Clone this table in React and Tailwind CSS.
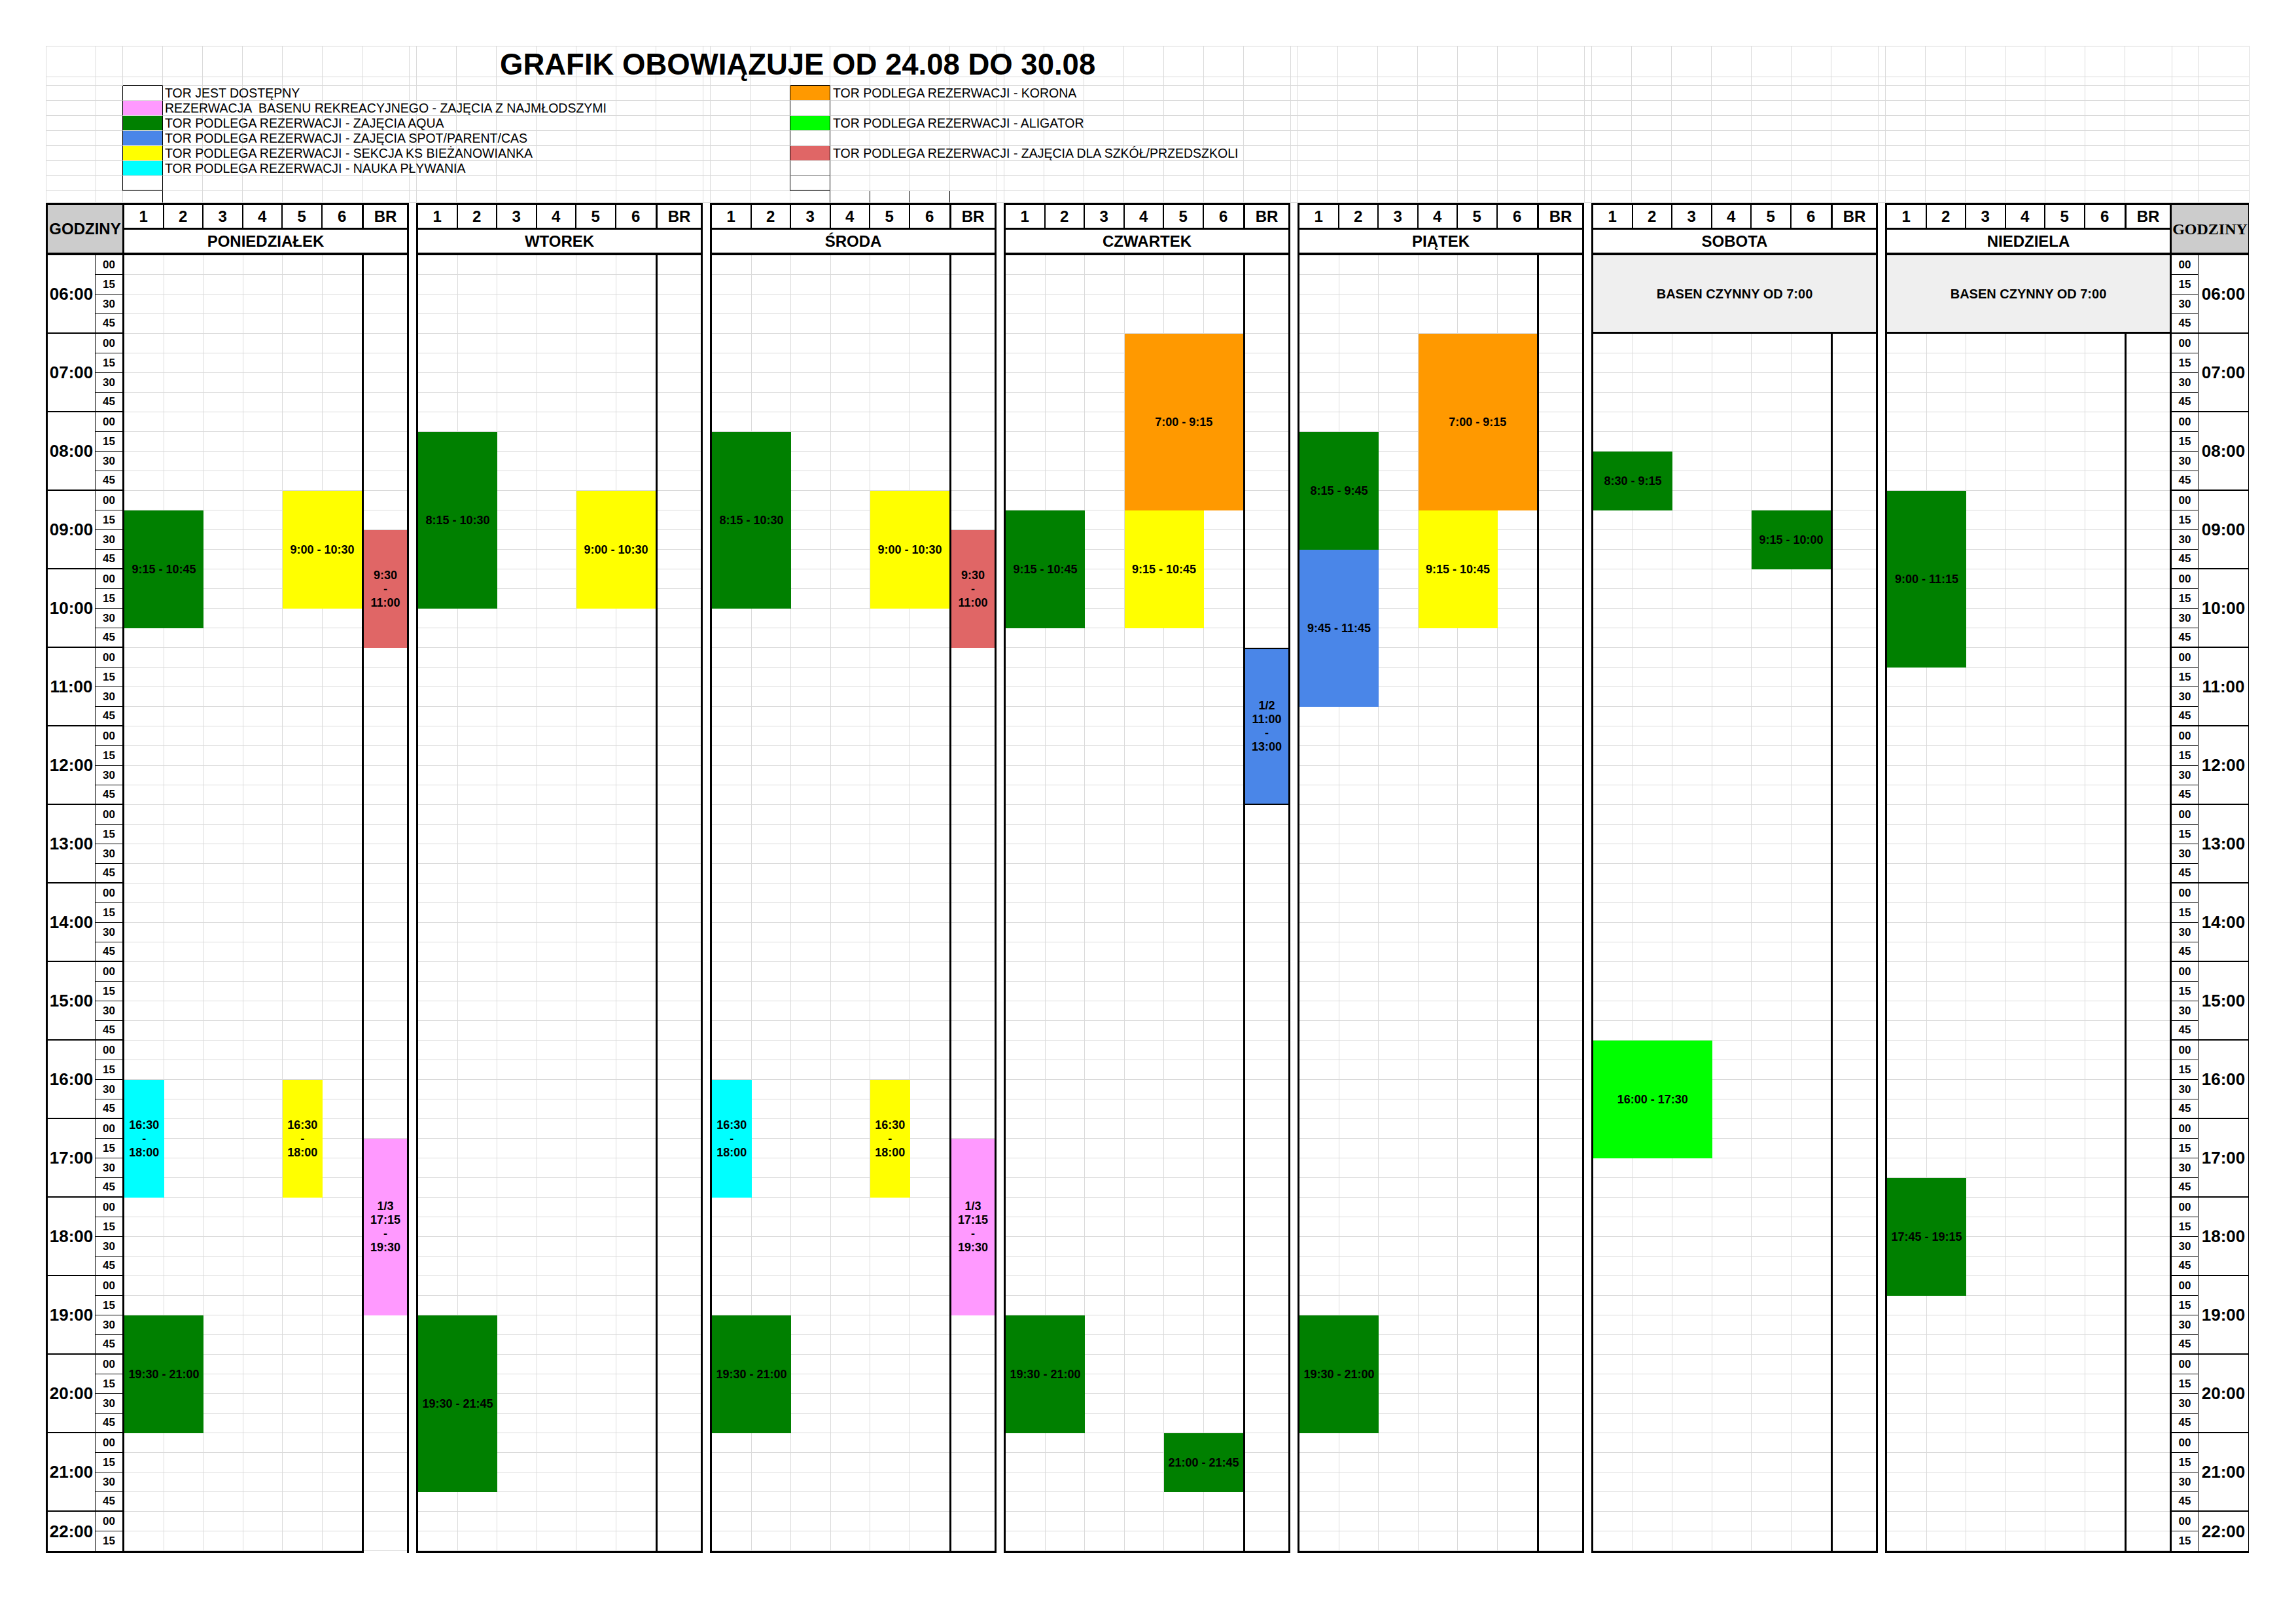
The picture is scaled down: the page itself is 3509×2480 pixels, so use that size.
import React from 'react';

const FONT = "font-['Liberation_Sans',Arial,sans-serif]";
const SERIF = "font-['Liberation_Serif','Times_New_Roman',serif]";

const DAYS = ['PONIEDZIAŁEK', 'WTOREK', 'ŚRODA', 'CZWARTEK', 'PIĄTEK', 'SOBOTA', 'NIEDZIELA'];

const COLORS = {
  green: 'bg-[#008000]',
  yellow: 'bg-[#ffff00]',
  cyan: 'bg-[#00ffff]',
  pink: 'bg-[#ff99ff]',
  red: 'bg-[#e06666]',
  blue: 'bg-[#4a86e8]',
  orange: 'bg-[#ff9900]',
  lime: 'bg-[#00ff00]',
};

const EVENTS = [
  // Poniedziałek
  { d: 0, k: 0, n: 2, s: '9:15', e: '10:45', l: ['9:15 - 10:45'], c: 'green' },
  { d: 0, k: 4, n: 2, s: '9:00', e: '10:30', l: ['9:00 - 10:30'], c: 'yellow' },
  { d: 0, k: -1, s: '9:30', e: '11:00', l: ['9:30', '-', '11:00'], c: 'red' },
  { d: 0, k: 0, n: 1, s: '16:30', e: '18:00', l: ['16:30', '-', '18:00'], c: 'cyan' },
  { d: 0, k: 4, n: 1, s: '16:30', e: '18:00', l: ['16:30', '-', '18:00'], c: 'yellow' },
  { d: 0, k: -1, s: '17:15', e: '19:30', l: ['1/3', '17:15', '-', '19:30'], c: 'pink' },
  { d: 0, k: 0, n: 2, s: '19:30', e: '21:00', l: ['19:30 - 21:00'], c: 'green' },
  // Wtorek
  { d: 1, k: 0, n: 2, s: '8:15', e: '10:30', l: ['8:15 - 10:30'], c: 'green' },
  { d: 1, k: 4, n: 2, s: '9:00', e: '10:30', l: ['9:00 - 10:30'], c: 'yellow' },
  { d: 1, k: 0, n: 2, s: '19:30', e: '21:45', l: ['19:30 - 21:45'], c: 'green' },
  // Środa
  { d: 2, k: 0, n: 2, s: '8:15', e: '10:30', l: ['8:15 - 10:30'], c: 'green' },
  { d: 2, k: 4, n: 2, s: '9:00', e: '10:30', l: ['9:00 - 10:30'], c: 'yellow' },
  { d: 2, k: -1, s: '9:30', e: '11:00', l: ['9:30', '-', '11:00'], c: 'red' },
  { d: 2, k: 0, n: 1, s: '16:30', e: '18:00', l: ['16:30', '-', '18:00'], c: 'cyan' },
  { d: 2, k: 4, n: 1, s: '16:30', e: '18:00', l: ['16:30', '-', '18:00'], c: 'yellow' },
  { d: 2, k: -1, s: '17:15', e: '19:30', l: ['1/3', '17:15', '-', '19:30'], c: 'pink' },
  { d: 2, k: 0, n: 2, s: '19:30', e: '21:00', l: ['19:30 - 21:00'], c: 'green' },
  // Czwartek
  { d: 3, k: 0, n: 2, s: '9:15', e: '10:45', l: ['9:15 - 10:45'], c: 'green' },
  { d: 3, k: 3, n: 3, s: '7:00', e: '9:15', l: ['7:00 - 9:15'], c: 'orange' },
  { d: 3, k: 3, n: 2, s: '9:15', e: '10:45', l: ['9:15 - 10:45'], c: 'yellow' },
  { d: 3, k: -1, s: '11:00', e: '13:00', l: ['1/2', '11:00', '-', '13:00'], c: 'blue', b: true },
  { d: 3, k: 0, n: 2, s: '19:30', e: '21:00', l: ['19:30 - 21:00'], c: 'green' },
  { d: 3, k: 4, n: 2, s: '21:00', e: '21:45', l: ['21:00 - 21:45'], c: 'green' },
  // Piątek
  { d: 4, k: 0, n: 2, s: '8:15', e: '9:45', l: ['8:15 - 9:45'], c: 'green' },
  { d: 4, k: 0, n: 2, s: '9:45', e: '11:45', l: ['9:45 - 11:45'], c: 'blue' },
  { d: 4, k: 3, n: 3, s: '7:00', e: '9:15', l: ['7:00 - 9:15'], c: 'orange' },
  { d: 4, k: 3, n: 2, s: '9:15', e: '10:45', l: ['9:15 - 10:45'], c: 'yellow' },
  { d: 4, k: 0, n: 2, s: '19:30', e: '21:00', l: ['19:30 - 21:00'], c: 'green' },
  // Sobota
  { d: 5, k: 0, n: 2, s: '8:30', e: '9:15', l: ['8:30 - 9:15'], c: 'green' },
  { d: 5, k: 4, n: 2, s: '9:15', e: '10:00', l: ['9:15 - 10:00'], c: 'green' },
  { d: 5, k: 0, n: 3, s: '16:00', e: '17:30', l: ['16:00 - 17:30'], c: 'lime' },
  // Niedziela
  { d: 6, k: 0, n: 2, s: '9:00', e: '11:15', l: ['9:00 - 11:15'], c: 'green' },
  { d: 6, k: 0, n: 2, s: '17:45', e: '19:15', l: ['17:45 - 19:15'], c: 'green' },
];

const toMin = (t) => {
  const [h, m] = t.split(':').map(Number);
  return h * 60 + m;
};

const LEFT_LEGEND = [
  { c: 'bg-white', t: 'TOR JEST DOSTĘPNY' },
  { c: 'bg-[#ff99ff]', t: 'REZERWACJA  BASENU REKREACYJNEGO - ZAJĘCIA Z NAJMŁODSZYMI' },
  { c: 'bg-[#008000]', t: 'TOR PODLEGA REZERWACJI - ZAJĘCIA AQUA' },
  { c: 'bg-[#4a86e8]', t: 'TOR PODLEGA REZERWACJI - ZAJĘCIA SPOT/PARENT/CAS' },
  { c: 'bg-[#ffff00]', t: 'TOR PODLEGA REZERWACJI - SEKCJA KS BIEŻANOWIANKA' },
  { c: 'bg-[#00ffff]', t: 'TOR PODLEGA REZERWACJI - NAUKA PŁYWANIA' },
  { c: 'bg-white', t: '' },
];

const RIGHT_LEGEND = [
  { c: 'bg-[#ff9900]', t: 'TOR PODLEGA REZERWACJI - KORONA' },
  { c: 'bg-white', t: '' },
  { c: 'bg-[#00ff00]', t: 'TOR PODLEGA REZERWACJI - ALIGATOR' },
  { c: 'bg-white', t: '' },
  { c: 'bg-[#e06666]', t: 'TOR PODLEGA REZERWACJI - ZAJĘCIA DLA SZKÓŁ/PRZEDSZKOLI' },
  { c: 'bg-white', t: '' },
  { c: 'bg-white', t: '' },
];

const TOP_COLS = (() => {
  const cols = [{ t: 'h', w: 'w-[76px]' }, { t: 'm', w: 'w-[41px]' }];
  for (let d = 0; d < 7; d++) {
    for (let k = 0; k < 6; k++) cols.push({ t: 'l', d, k, w: 'w-[61px]' });
    cols.push({ t: 'br', d, w: 'w-[72px]' });
    if (d < 6) cols.push({ t: 'g', d, w: 'w-[11px]' });
  }
  cols.push({ t: 'rm', w: 'w-[41px]' });
  cols.push({ t: 'rh', w: 'w-[77px]' });
  return cols;
})();

const TOP_ROWS = [
  'h-[47px]', 'h-[13px]', 'h-[23px]', 'h-[23px]', 'h-[23px]', 'h-[23px]',
  'h-[23px]', 'h-[23px]', 'h-[23px]', 'h-[18px]',
];

function LegendText({ text, pad }) {
  return (
    <span className={`relative z-10 block whitespace-pre text-[19.5px] leading-[22px] ${pad}`}>{text}</span>
  );
}

function TopCell({ r, c }) {
  const L = (d, k) => c.t === 'l' && c.d === d && c.k === k;
  let right = 'border-r-[#dadada]';
  let bottom = 'border-b border-b-[#dadada]';
  let bg = '';
  let content = null;

  if (r === 0 && L(1, 2)) {
    content = (
      <span className="relative z-10 block whitespace-nowrap pl-[5px] pt-[4px] text-[45.5px] leading-[47px] font-bold">
        GRAFIK OBOWIĄZUJE OD 24.08 DO 30.08
      </span>
    );
  }
  if (r === 1 && (L(0, 0) || L(2, 2))) bottom = 'border-b border-b-black';
  if (r >= 2 && r <= 8) {
    const i = r - 2;
    if (c.t === 'm' || L(2, 1)) right = 'border-r-black';
    if (L(0, 0)) {
      bg = LEFT_LEGEND[i].c;
      right = 'border-r-black';
      if (r === 8) bottom = 'border-b-2 border-b-[#666666]';
    }
    if (L(2, 2)) {
      bg = RIGHT_LEGEND[i].c;
      right = 'border-r-black';
      if (r === 8) bottom = 'border-b-2 border-b-[#666666]';
      if (r === 7) bottom = 'border-b border-b-[#888888]';
    }
    if (L(0, 1) && LEFT_LEGEND[i].t) content = <LegendText text={LEFT_LEGEND[i].t} pad="pl-[3px]" />;
    if (L(2, 3) && RIGHT_LEGEND[i].t) content = <LegendText text={RIGHT_LEGEND[i].t} pad="pl-[4px]" />;
  }
  if (r === 9 && (L(0, 0) || L(2, 2) || L(2, 3) || L(2, 4) || L(2, 5))) right = 'border-r-black';

  return <div className={`shrink-0 border-r ${right} ${bottom} ${bg} ${c.w}`}>{content}</div>;
}

function TopArea() {
  return (
    <div className="flex w-max flex-col border-l border-t border-[#dadada]">
      {TOP_ROWS.map((h, r) => (
        <div key={r} className={`flex ${h}`}>
          {TOP_COLS.map((c, i) => (
            <TopCell key={i} r={r} c={c} />
          ))}
        </div>
      ))}
    </div>
  );
}

function DayHeader({ name }) {
  return (
    <div className="flex h-[80px] w-[438px] shrink-0 flex-col border-x-[3px] border-b-[4px] border-t-[3px] border-black">
      <div className="flex h-[35px]">
        {[1, 2, 3, 4, 5, 6].map((n) => (
          <div
            key={n}
            className={`flex w-[60.5px] items-center justify-center text-[24px] font-bold ${n < 6 ? 'border-r-2 border-black' : ''}`}
          >
            {n}
          </div>
        ))}
        <div className="flex flex-1 items-center justify-center border-l-[3px] border-black text-[24px] font-bold">BR</div>
      </div>
      <div className="flex flex-1 items-center justify-center border-t-[3px] border-black text-[24px] font-bold">{name}</div>
    </div>
  );
}

function EventBlock({ e }) {
  const top = (toMin(e.s) - 360) * 2;
  const height = (toMin(e.e) - toMin(e.s)) * 2;
  const style = e.k >= 0
    ? { top, height, left: `${(e.k * 100) / 6}%`, width: `${(e.n * 100) / 6}%` }
    : { top, height, left: 0, right: 0 };
  return (
    <div
      className={`absolute z-10 flex flex-col items-center justify-center text-center text-[18px] font-bold leading-[21px] text-black ${COLORS[e.c]} ${e.b ? 'border-y-2 border-black' : ''}`}
      style={style}
    >
      {e.l.map((line, i) => (
        <div key={i} className="whitespace-nowrap">{line}</div>
      ))}
    </div>
  );
}

const ROWS = Array.from({ length: 66 }, (_, i) => i);

function DayBody({ d }) {
  const evs = EVENTS.filter((e) => e.d === d);
  const closed = d >= 5;
  return (
    <div className="relative flex w-[438px] shrink-0">
      <div className="relative grid w-[366px] grid-cols-6 border-b-[3px] border-l-[3px] border-black">
        {ROWS.map((r) =>
          [0, 1, 2, 3, 4, 5].map((k) => (
            <div
              key={`${r}-${k}`}
              className={`h-[30px] border-b border-[#dadada] ${k < 5 ? 'border-r' : ''}`}
            />
          ))
        )}
        {evs.filter((e) => e.k >= 0).map((e, i) => (
          <EventBlock key={i} e={e} />
        ))}
      </div>
      <div className={`relative w-[72px] border-x-[3px] border-black ${d === 0 ? '' : 'border-b-[3px]'}`}>
        {ROWS.map((r) => (
          <div key={r} className="h-[30px] border-b border-[#dadada]" />
        ))}
        {evs.filter((e) => e.k < 0).map((e, i) => (
          <EventBlock key={i} e={e} />
        ))}
      </div>
      {closed && (
        <div className="absolute left-[3px] right-[3px] top-0 z-20 flex h-[120px] items-center justify-center border-b-[3px] border-black bg-[#efefef] text-[20px] font-bold">
          BASEN CZYNNY OD 7:00
        </div>
      )}
    </div>
  );
}

const HOURS = ['06:00', '07:00', '08:00', '09:00', '10:00', '11:00', '12:00', '13:00', '14:00', '15:00', '16:00', '17:00', '18:00', '19:00', '20:00', '21:00', '22:00'];
const MINS = ['00', '15', '30', '45'];

function HourColumn({ side }) {
  return (
    <div
      className={`flex shrink-0 flex-col border-b-[3px] border-r border-black ${side === 'left' ? 'w-[76px] border-l-[3px]' : 'w-[77px]'}`}
    >
      {HOURS.map((h, i) => (
        <div
          key={h}
          className={`flex items-center justify-center text-[26px] font-bold ${i < 16 ? 'h-[120px] border-b-2 border-black' : 'h-[60px]'}`}
        >
          {h}
        </div>
      ))}
    </div>
  );
}

function MinuteColumn({ side }) {
  return (
    <div className={`flex w-[41px] shrink-0 flex-col border-b-[3px] border-black ${side === 'right' ? 'border-r' : ''}`}>
      {ROWS.map((r) => (
        <div
          key={r}
          className={`flex h-[30px] items-center justify-center text-[17px] font-bold ${r < 65 ? (r % 4 === 3 ? 'border-b-2 border-black' : 'border-b border-black') : ''}`}
        >
          {MINS[r % 4]}
        </div>
      ))}
    </div>
  );
}

export default function App() {
  return (
    <div className={`h-[2480px] w-[3509px] overflow-hidden bg-white pl-[70px] pt-[70px] text-black ${FONT}`}>
      <TopArea />
      <div className="flex">
        <div className="flex h-[80px] w-[117px] shrink-0 items-center justify-center border-b-[4px] border-l-[3px] border-t-[3px] border-black bg-[#cccccc] text-[24px] font-bold">
          GODZINY
        </div>
        {DAYS.map((name, d) => (
          <React.Fragment key={name}>
            <DayHeader name={name} />
            {d < 6 && <div className="w-[11px] shrink-0" />}
          </React.Fragment>
        ))}
        <div className={`flex h-[80px] w-[118px] shrink-0 items-center justify-center overflow-hidden border-b-[4px] border-r border-t-[3px] border-black bg-[#cccccc] text-[24px] font-bold ${SERIF}`}>
          GODZINY
        </div>
      </div>
      <div className="flex">
        <HourColumn side="left" />
        <MinuteColumn side="left" />
        {DAYS.map((name, d) => (
          <React.Fragment key={name}>
            <DayBody d={d} />
            {d < 6 && <div className="w-[11px] shrink-0" />}
          </React.Fragment>
        ))}
        <MinuteColumn side="right" />
        <HourColumn side="right" />
      </div>
    </div>
  );
}
